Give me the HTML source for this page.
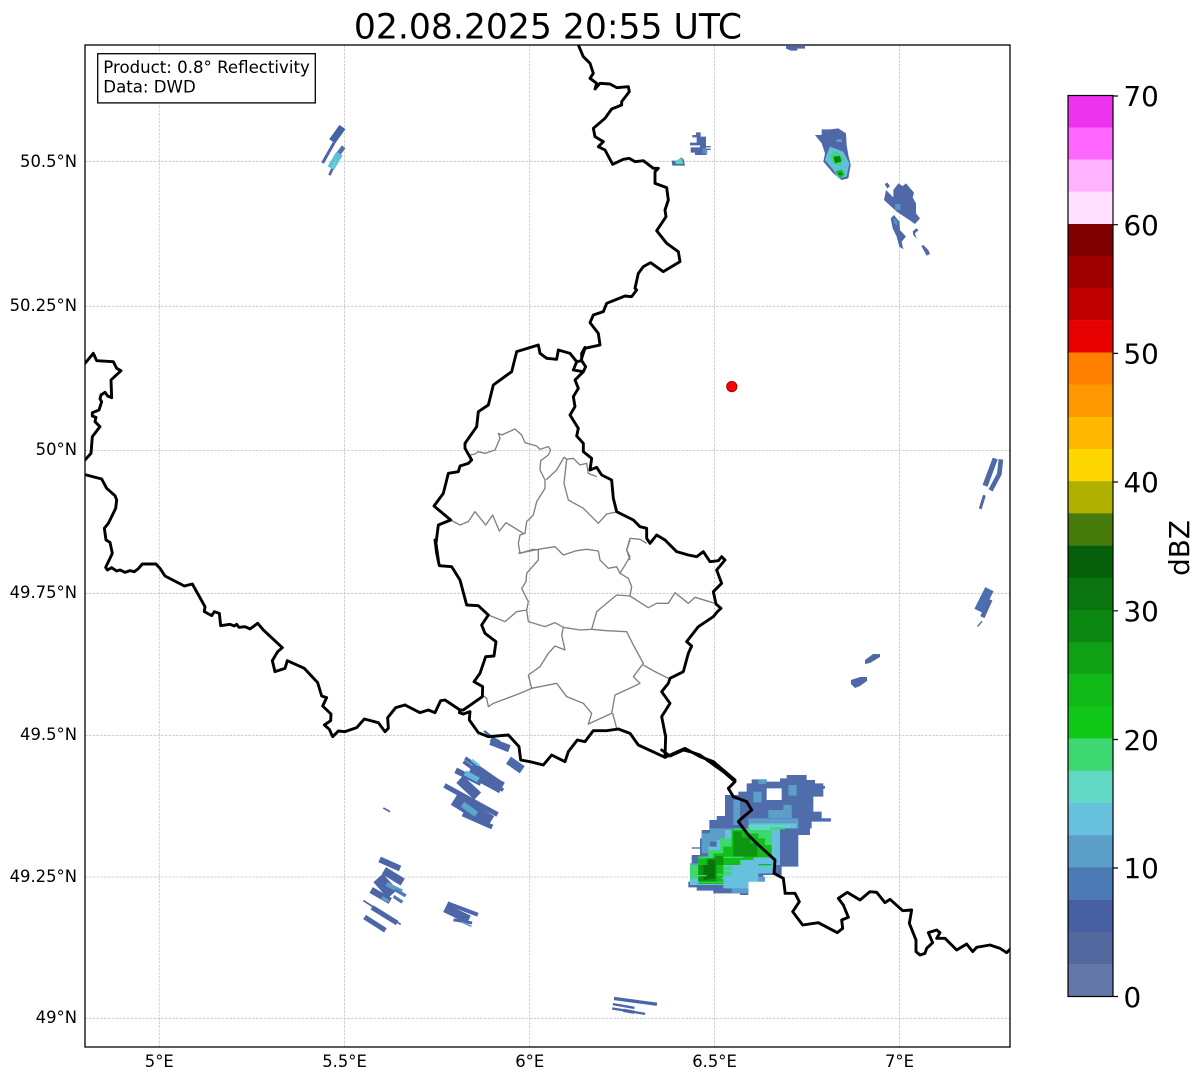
<!DOCTYPE html>
<html><head><meta charset="utf-8"><style>
html,body{margin:0;padding:0;background:#fff;width:1202px;height:1081px;overflow:hidden}
svg{display:block}
text{font-family:"DejaVu Sans","Liberation Sans",sans-serif;fill:#000}
.t{font-size:16.4px}
.c{font-size:27.8px}
.g line{stroke:#c4c4c4;stroke-width:.8;stroke-dasharray:2.6 1.2}
.k path{fill:none;stroke:#000;stroke-width:2.9;stroke-linejoin:round;stroke-linecap:round;vector-effect:non-scaling-stroke}
.y path{fill:none;stroke:#808080;stroke-width:1.35;stroke-linejoin:round;vector-effect:non-scaling-stroke}
.l path{fill:none;stroke-linecap:square;stroke-linejoin:round}
</style></head><body>
<svg width="1202" height="1081" viewBox="0 0 1202 1081" xmlns="http://www.w3.org/2000/svg">
<defs><clipPath id="ax"><rect x="85" y="45" width="925" height="1002"/></clipPath></defs>
<text x="548" y="38.5" text-anchor="middle" font-size="34.6">02.08.2025 20:55 UTC</text>

<g class="g" clip-path="url(#ax)">
<line x1="159.3" y1="45" x2="159.3" y2="1047"/><line x1="344.5" y1="45" x2="344.5" y2="1047"/><line x1="529.7" y1="45" x2="529.7" y2="1047"/><line x1="714.5" y1="45" x2="714.5" y2="1047"/><line x1="899.5" y1="45" x2="899.5" y2="1047"/>
<line x1="85" y1="161.3" x2="1010" y2="161.3"/><line x1="85" y1="306.3" x2="1010" y2="306.3"/><line x1="85" y1="450.5" x2="1010" y2="450.5"/><line x1="85" y1="593.3" x2="1010" y2="593.3"/><line x1="85" y1="735.3" x2="1010" y2="735.3"/><line x1="85" y1="877" x2="1010" y2="877"/><line x1="85" y1="1018.3" x2="1010" y2="1018.3"/>
</g>

<g clip-path="url(#ax)">
<!-- main cell -->
<g transform="translate(670,750) scale(.33333)">
<path fill="#4f6cab" fill-rule="evenodd" d="M55,412V395H60V340H65V315H90V265H95V240H118V210H140V198H165V135H205V125H230V100H245V88H290V95H330V85H350V75H410V90H435V100H460V140H430V185H455V205H480V215H425V235H420V255H385V350H335V375H280V395H235V435H210V430H130V422H80V412Z M290,115V150H335V115Z"/>
<g fill="#5b9ec8">
<rect x="265" y="88" width="24" height="14"/><rect x="250" y="125" width="25" height="32"/>
<rect x="355" y="105" width="25" height="32"/><rect x="340" y="165" width="25" height="30"/>
<rect x="295" y="180" width="70" height="24"/><rect x="190" y="150" width="20" height="75"/>
<rect x="95" y="250" width="25" height="60"/><rect x="120" y="235" width="70" height="40"/>
<rect x="235" y="205" width="150" height="30"/><rect x="60" y="340" width="30" height="65"/>
<rect x="305" y="250" width="25" height="90"/><rect x="185" y="415" width="50" height="15"/>
<rect x="265" y="380" width="20" height="15"/>
</g>
<path fill="#66c0de" d="M60,405V350H90V320H115V290H140V270H165V240H240V220H380V235H330V345H310V370H265V395H235V415H160V405Z"/>
<path fill="#60d8c4" d="M235,225H360V232H300V245H235Z"/>
<path fill="#3dd870" d="M60,385V345H85V320H115V300H150V265H190V235H240V240H300V232H345V238H305V310H250V330H215V345H185V375H160V400H85V385Z"/>
<path fill="#10c018" d="M85,395V325H130V310H160V290H185V240H230V250H265V265H285V285H305V322H250V330H210V345H160V395Z"/>
<path fill="#0e9612" d="M85,395V345H110V325H135V318H160V345H140V395Z M190,245H215V262H240V280H262V320H190Z"/>
<path fill="#08720c" d="M100,390V345H115V330H135V385Z"/>
<g fill="#3dd870"><rect x="140" y="372" width="45" height="4"/><rect x="60" y="375" width="50" height="4"/><rect x="160" y="320" width="60" height="4"/></g>
<g fill="#66c0de"><rect x="160" y="345" width="55" height="5"/><rect x="155" y="382" width="70" height="5"/><rect x="160" y="360" width="60" height="5"/></g>
<g fill="#10c018"><rect x="85" y="398" width="75" height="4"/><rect x="265" y="342" width="40" height="4"/></g>
<g fill="#4f6cab"><rect x="65" y="292" width="26" height="4"/><rect x="435" y="205" width="48" height="9"/><rect x="430" y="108" width="35" height="8"/><rect x="400" y="150" width="30" height="7"/><rect x="120" y="210" width="25" height="16"/></g>
</g>
<!-- south-west group -->
<g transform="translate(350,740) scale(.33333)" class="l" stroke="#4c66a8">
<path stroke-width="16" d="M440,5 430,0"/>
<path stroke-width="11" d="M350,57 455,130M345,68 455,148"/>
<path stroke-width="36" d="M375,100 440,135"/>
<path stroke-width="18" d="M325,95 385,125"/>
<path stroke-width="30" d="M340,128 372,158"/>
<path stroke-width="15" d="M290,140 436,220"/>
<path stroke-width="40" d="M330,188 405,235"/>
<path stroke-width="15" d="M345,225 420,258"/>
<path stroke-width="16" stroke="#60b8d8" d="M352,102 378,116"/>
<path stroke-width="8" stroke="#62d0d8" d="M368,62 384,74"/>
<path stroke-width="18" stroke="#58a8cc" d="M345,198 372,218"/>
<path stroke-width="26" stroke="#4a6cad" d="M486,68 506,82"/>
<path stroke-width="5" d="M102,205 118,214"/>
<path stroke-width="18" d="M97,362 142,382"/>
<path stroke-width="24" d="M112,398 148,420"/>
<path stroke-width="38" d="M97,428 115,448"/>
<path stroke-width="20" d="M72,455 112,478"/>
<path stroke-width="13" stroke="#5b9ec8" d="M115,435 150,452"/>
<path stroke-width="10" stroke="#4f78b4" d="M140,452 163,465M135,472 153,484"/>
<path stroke-width="9" stroke="#5b9ec8" d="M100,475 112,482"/>
<path stroke-width="5" d="M42,483 150,552"/>
<path stroke-width="15" d="M72,506 135,545"/>
<path stroke-width="15" d="M50,535 100,567"/>
<path stroke-width="12" d="M298,492 378,522"/>
<path stroke-width="26" d="M297,510 345,533"/>
<path stroke-width="9" d="M315,540 362,548"/>
<path stroke-width="5" stroke="#5b9ec8" d="M340,548 362,558"/>
<path stroke-width="10" stroke="#4668ab" d="M797,776 916,792"/>
<path stroke-width="7" d="M792,793 850,803M790,806 882,821"/>
<path stroke-width="10" stroke="#4668ab" d="M825,812 848,816"/>
</g>
<g transform="translate(350,700) scale(.33333)" class="l" stroke="#4c66a8">
<path stroke-width="7" d="M405,95 440,122"/>
<path stroke-width="22" d="M432,128 468,142"/>
</g>
<!-- top centre -->
<g transform="translate(560,40) scale(.33333)">
<path fill="#4f69a8" d="M397,285H408V277H422V290H438V318H452V322H438V326H452V330H440V345H405V338H392V322H420V316H390V308H410V292H397Z"/>
<rect x="428" y="325" width="14" height="16" fill="#5c8fc4"/>
<path fill="#4f69a8" d="M335,362H350L365,352 372,360 375,377H337Z"/>
<path fill="#60d0c4" d="M345,362 365,355 370,372 348,372Z"/>
</g>
<!-- top right -->
<g transform="translate(780,40) scale(.33333)">
<path fill="#4f69a8" d="M18,18H75V26H52V32H32L18,26Z"/>
<path fill="#4f69a8" d="M105,285H125V268H150L175,265 198,280 200,315 205,345 212,375 205,415 185,420 160,400 130,365 135,340 125,310Z"/>
<path fill="#66bede" d="M140,345 150,320 190,335 208,370 200,410 175,415 160,390 135,360Z"/>
<path fill="#3dd870" d="M148,345 170,335 192,355 182,378 160,372Z"/>
<path fill="#10c018" d="M166,395 185,388 194,405 180,414Z"/>
<path fill="#0a8012" d="M160,350 180,348 184,365 165,370Z M175,398 185,398 185,405 175,405Z"/>
<rect x="170" y="298" width="16" height="8" fill="#66a0cc"/>
<path fill="#4f69a8" d="M314,432 322,428 330,438 322,446Z"/>
<path fill="#4f69a8" d="M340,450 355,430 368,438 378,430 402,458 398,472 408,490 408,520 420,535 405,552 385,538 350,515 312,480 318,450 340,472Z"/>
<rect x="345" y="492" width="16" height="18" fill="#5c94c8"/>
<path fill="#4f69a8" d="M332,535 342,525 358,545 360,570 378,590 365,605 370,628 358,620 350,590 338,565Z"/>
<path fill="#5c94c8" d="M340,535 350,540 352,555 344,552Z"/>
<path fill="#4f69a8" d="M398,575 408,565 416,570 405,580 410,597 400,585Z M424,618 430,615 445,630 450,642 440,647Z"/>
</g>
<!-- top left -->
<g transform="translate(85,40) scale(.33333)" class="l" stroke="#4c66a8">
<path stroke-width="22" stroke="#4464a8" d="M748,295 766,270"/>
<path stroke-width="9" d="M715,365 745,312"/>
<path stroke-width="14" stroke="#5a70a8" d="M758,345 772,326"/>
<path stroke-width="8" d="M735,402 745,380"/>
<path stroke-width="22" stroke="#60c0d8" d="M743,375 758,350"/>
<path stroke-width="6" stroke="#60d8c4" d="M742,382 752,365"/>
</g>
<!-- right edge -->
<g transform="translate(960,450) scale(.33333)" class="l" stroke="#4f69a8">
<path stroke-width="16" d="M103,33 78,100"/>
<path stroke-width="14" d="M122,35 118,72 95,115"/>
<path stroke-width="9" d="M72,140 62,172"/>
<path stroke-width="28" stroke="#4a70b0" d="M82,430 62,470"/>
<path stroke-width="14" d="M88,455 70,495"/>
<path stroke-width="4" d="M65,515 54,528"/>
</g>
<!-- mid-right -->
<g fill="#4f69a8">
<path d="M865,660 873,654 880,654 880,657 870,663 865,664Z"/>
<path d="M851,680 860,677 867,677 867,681 860,686 855,688 851,684Z"/>
</g>

<!-- cantons -->
<g transform="translate(420,330) scale(.33333)" class="y">
<path d="M150,375 165,372 175,365 195,370 225,360 240,325 235,310 245,315 285,297 305,315 315,338 350,348 360,358 385,350 392,360 385,375 362,392 360,420 375,450 375,475 350,515 340,555 320,575 315,610 300,615 295,640 300,670 340,658 355,660"/>
<path d="M378,450 410,420 432,382 440,388 460,385 480,405 500,400 505,430 530,440"/>
<path d="M440,388 432,460 445,510 490,535 535,580 560,552 595,545"/>
<path d="M92,570 120,585 145,575 165,545 197,585 218,555 238,603 258,578 310,610"/>
<path d="M680,640 660,628 630,625 620,660 630,690"/>
</g>
<g transform="translate(420,540) scale(.33333)" class="y">
<path d="M295,40 355,28 405,20 430,45 470,32 500,28 535,33 540,60 565,85 590,80 600,100 630,50 620,30 630,0"/>
<path d="M600,100 625,115 635,140 630,168"/>
<path d="M355,28 355,60 320,100 318,125 305,145 325,185 320,210 325,245 375,260 405,248 430,262"/>
<path d="M205,225 255,245 290,215 320,210"/>
<path d="M430,262 425,285 435,330 405,318 385,340 360,380 325,405 335,445"/>
<path d="M430,262 480,270 515,268 530,215 590,165 630,168 685,203 710,190 745,190 765,158 805,190 825,172 885,190"/>
<path d="M515,268 560,272 620,275 640,315 670,370 640,410 660,430 640,440 585,465 575,520 505,552 515,520 490,490 440,470 410,430 335,445 295,462 220,490 205,500 200,475 187,465"/>
<path d="M670,375 705,395 745,415"/>
<path d="M578,520 590,565"/>
</g>

<!-- national borders -->
<g transform="translate(85,330) scale(.33333)" class="k">
<path d="M0,100 25,70 35,92 85,95 95,115 108,122 78,150 80,203 68,198 60,187 48,195 45,207 50,215 42,240 22,248 22,258 33,262 30,275 45,290 22,320 18,370 0,390"/>
<path d="M0,434 50,447 65,475 90,497 95,510 92,535 70,580 58,595 63,630 75,637 82,670 62,712 67,720 80,713 95,723 105,720 120,727 135,722 148,725 160,716 172,702 213,702 225,715 240,738 298,768 322,762 360,830 358,845 380,857 388,845 403,850 407,887 435,883 448,888 455,883 462,892 480,890 495,897 518,880 535,900 592,953 578,965 562,992 570,1025 600,1015 607,992 658,1015 698,1058 710,1098 725,1103 713,1128 738,1152 737,1172 718,1185 733,1198 743,1220 760,1203 780,1205 815,1193 838,1167 880,1178 900,1205 910,1195 908,1163 932,1133 960,1125"/>
</g>
<g transform="translate(420,540) scale(.33333)" class="k">
<path d="M-45,495 0,518 25,510 45,518 62,482 75,480 120,510 118,518 130,522 150,515 148,540 175,578 205,590 265,585 297,620 302,660 330,665 370,675 395,645 435,665 445,635 472,600 495,605 520,572 560,572 595,567 630,580 655,615 735,652 795,625 840,650 880,665 945,720"/>
<path d="M735,652 737,590 725,530 750,490 725,455 745,430 750,415 790,395 805,340 815,318 800,305 835,260 880,230 892,215 903,205 888,192 880,155 905,130 890,90 915,60 905,50 895,62 870,65 850,35 830,50 805,45 770,35 735,0"/>
<path d="M45,0 50,40 58,77 95,80 120,120 140,195 175,197 205,225 185,255 195,280 228,305 222,348 197,350 180,400 162,425 188,440 187,470 130,510 120,510"/>
</g>
<g transform="translate(420,330) scale(.33333)" class="k">
<path d="M735,630 710,615 690,640 680,625 680,595 660,590 640,570 590,545 580,505 575,450 545,435 530,412 510,420 515,385 490,365 490,340 470,318 475,295 450,255 465,230 460,200 475,175 465,150 490,125 497,110 485,92 485,70 495,52"/>
<path d="M490,125 460,120 470,95 485,92"/>
<path d="M470,95 450,70 415,60 410,88 380,85 360,70 355,45 290,65 275,125 220,165 205,225 175,245 170,290 135,340 135,355 155,390 145,400 120,408 115,425 85,430 70,490 42,528 92,570 55,585 48,640 55,690"/>
</g>
<g transform="translate(670,750) scale(.33333)" class="k">
<path d="M-25,0 0,18 40,0 60,5 90,15 125,40 160,65 195,95 175,115 190,140 230,155 245,180 215,205 205,215 220,235 235,255 260,280 315,330 312,370 340,385 345,425"/>
</g>
<g transform="translate(780,840) scale(.33333)" class="k">
<path d="M15,160 45,160 58,185 38,215 68,255 115,248 172,278 188,265 185,240 205,232 190,195 175,175 202,157 240,180 270,155 290,157 315,188 330,178 368,212 395,210 388,250 408,300 408,335 420,345 435,340 440,325 458,308 445,278 470,270 480,278 470,295 495,295 530,330 560,312 578,335 590,322 630,315 660,325 680,338 690,328"/>
</g>
<g transform="translate(560,40) scale(.33333)" class="k">
<path d="M55,15 70,50 90,70 100,100 90,115 110,130 105,147 120,130 150,132 170,143 205,140 208,155 185,185 185,195 155,207 135,235 100,265 105,290 130,305 115,320 135,330 158,373 190,358 208,355 225,365 250,362 280,385 295,385 285,395 285,430 320,443 325,480 315,510 318,530 290,572 320,610 355,635 360,665 310,695 272,668 250,680 235,700 225,745 230,750 215,770 195,768 140,790 130,815 100,825 90,848 115,880 120,915 75,925 65,955"/>
</g>
<circle cx="731.8" cy="386.6" r="5.2" fill="#f00" stroke="#7a0000" stroke-width=".8"/>
</g>

<rect x="85" y="45" width="925" height="1002" fill="none" stroke="#000" stroke-width="1.3"/>

<rect x="97.7" y="53.7" width="217.6" height="49.2" fill="#fff" stroke="#000" stroke-width="1.3"/>
<text x="103.3" y="72.8" font-size="16.6">Product: 0.8° Reflectivity</text>
<text x="103.3" y="92.6" font-size="16.6">Data: DWD</text>

<g class="t" text-anchor="end">
<text x="77" y="167">50.5°N</text><text x="77" y="311">50.25°N</text><text x="77" y="455">50°N</text><text x="77" y="598">49.75°N</text><text x="77" y="740">49.5°N</text><text x="77" y="882">49.25°N</text><text x="77" y="1023">49°N</text>
</g>
<g class="t" text-anchor="middle">
<text x="159.3" y="1067">5°E</text><text x="344.5" y="1067">5.5°E</text><text x="529.7" y="1067">6°E</text><text x="714.5" y="1067">6.5°E</text><text x="899.5" y="1067">7°E</text>
</g>

<!-- colorbar -->
<g>
<rect x="1068" y="95.5" width="45" height="32.2" fill="#ee33ee"/>
<rect x="1068" y="127.5" width="45" height="32.2" fill="#ff66ff"/>
<rect x="1068" y="159.5" width="45" height="32.4" fill="#ffb3ff"/>
<rect x="1068" y="191.7" width="45" height="32.4" fill="#ffe0ff"/>
<rect x="1068" y="224" width="45" height="32.2" fill="#7f0000"/>
<rect x="1068" y="256" width="45" height="32.2" fill="#a00000"/>
<rect x="1068" y="288" width="45" height="32.4" fill="#bf0000"/>
<rect x="1068" y="320.2" width="45" height="32.4" fill="#e60000"/>
<rect x="1068" y="352.5" width="45" height="32.4" fill="#ff7f00"/>
<rect x="1068" y="384.7" width="45" height="32.4" fill="#ff9800"/>
<rect x="1068" y="416.9" width="45" height="32.4" fill="#ffb700"/>
<rect x="1068" y="449" width="45" height="32.4" fill="#ffd700"/>
<rect x="1068" y="481.2" width="45" height="32.4" fill="#b0b000"/>
<rect x="1068" y="513.4" width="45" height="32.4" fill="#467a0a"/>
<rect x="1068" y="545.6" width="45" height="32.4" fill="#065f0a"/>
<rect x="1068" y="577.8" width="45" height="32.4" fill="#0a7510"/>
<rect x="1068" y="610" width="45" height="32.4" fill="#0c8812"/>
<rect x="1068" y="642" width="45" height="32.4" fill="#0fa014"/>
<rect x="1068" y="674.2" width="45" height="32.4" fill="#10b818"/>
<rect x="1068" y="706.4" width="45" height="32.4" fill="#10c818"/>
<rect x="1068" y="738.6" width="45" height="32.4" fill="#3dd870"/>
<rect x="1068" y="770.8" width="45" height="32.4" fill="#60d8c4"/>
<rect x="1068" y="803" width="45" height="32.4" fill="#66c0de"/>
<rect x="1068" y="835.2" width="45" height="32.4" fill="#5b9ec8"/>
<rect x="1068" y="867.4" width="45" height="32.4" fill="#4c7ab4"/>
<rect x="1068" y="899.6" width="45" height="32.4" fill="#4660a3"/>
<rect x="1068" y="931.8" width="45" height="32.4" fill="#5468a0"/>
<rect x="1068" y="964" width="45" height="32.8" fill="#6475a7"/>
<rect x="1068" y="95.5" width="45" height="901" fill="none" stroke="#000" stroke-width="1.2"/>
<path stroke="#000" stroke-width="1.2" d="M1113,96H1118M1113,224.7H1118M1113,353.4H1118M1113,482H1118M1113,610.8H1118M1113,739.5H1118M1113,868H1118M1113,996.5H1118"/>
</g>
<g class="c">
<text x="1123.5" y="106">70</text><text x="1123.5" y="235">60</text><text x="1123.5" y="363.5">50</text><text x="1123.5" y="492">40</text><text x="1123.5" y="621">30</text><text x="1123.5" y="750">20</text><text x="1123.5" y="878">10</text><text x="1123.5" y="1007">0</text>
</g>
<text transform="translate(1189,548) rotate(-90)" text-anchor="middle" class="c">dBZ</text>
</svg>
</body></html>
